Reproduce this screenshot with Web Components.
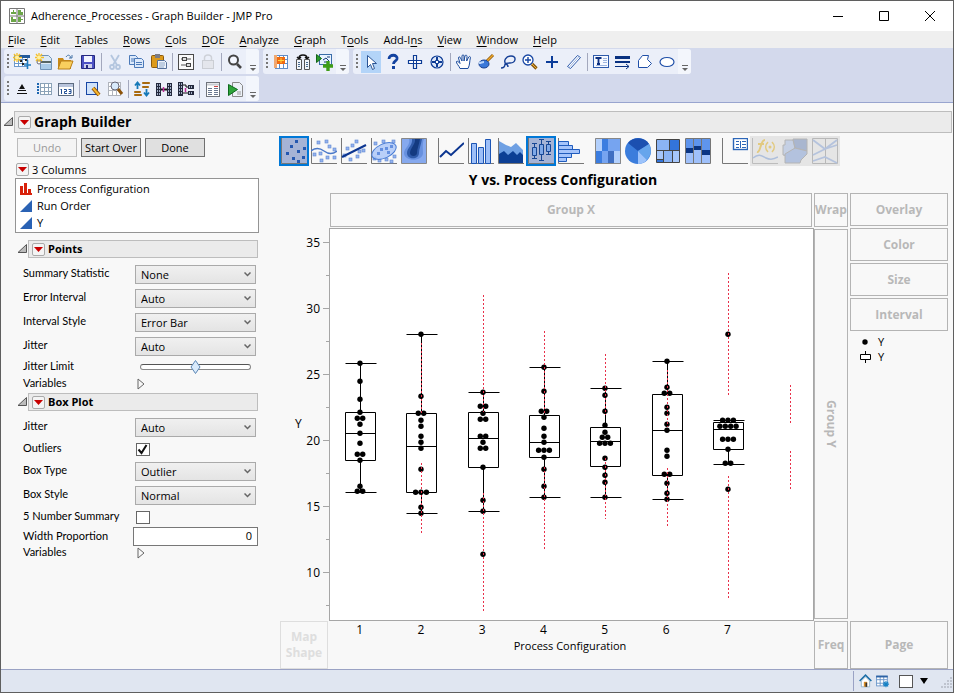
<!DOCTYPE html>
<html lang="en">
<head>
<meta charset="utf-8">
<title>Adherence_Processes - Graph Builder - JMP Pro</title>
<style>
  html, body { margin: 0; }
  body { font: 11px/16px "Open Sans", "Noto Sans", sans-serif; color: #000; background: #f8f8f8; }
</style>
</head>
<body>
<app-window></app-window>
<script>
const define = (name, html, setup) => {
  const tpl = document.createElement('template');
  customElements.define(name, class extends HTMLElement {
    constructor() { super(); this.attachShadow({ mode: 'open' }); }
    connectedCallback() {
      if (this.shadowRoot.childNodes.length) return;
      tpl.innerHTML = typeof html === 'function' ? html(this) : html;
      this.shadowRoot.append(tpl.content.cloneNode(true));
      if (setup) setup(this);
    }
  });
};

/* ---------- toolbar glyphs, 20 x 20 ---------- */
const star = '<path d="M5 1v9M1 5.500h9M2 2l6 7M8 2l-6 7" stroke="#f5c02a" stroke-width="1.300"/><circle cx="5" cy="5.500" r="2" fill="#fff0a0"/>';
const gridlines = (x, y, w, h, c) => `<rect x="${x}" y="${y}" width="${w}" height="${h}" fill="#fff" stroke="${c}"/><path d="M${x} ${y + 4}h${w}M${x} ${y + 8}h${w}M${x + 4} ${y}v${h}M${x + 8} ${y}v${h}" stroke="${c}"/>`;
const ICONS = {
  newtable: gridlines(2.5, 3.5, 13, 11, '#6b98cc') + '<path d="M6 3h12v3H6z" fill="#235a9c"/><path d="M8 8h2v2H8zM13 7h2v2h-2zM10 11h2v2h-2z" fill="#222"/><path d="M15.500 8v9M12 13h7" stroke="#1c7bc0" stroke-width="1.600"/>' + star,
  newscript: '<path d="M6.500 3.500h8l3 3v11h-11z" fill="#dceaf7" stroke="#6f93b8"/><path d="M5 10h12" stroke="#566" stroke-width="2"/><circle cx="5" cy="10" r="2" fill="#fff" stroke="#667"/><path d="M7 12h10v5H7z" fill="#a9cbe8"/>' + star,
  open: '<path d="M2 6h5l1 2h7v9H2z" fill="#c88a18"/><path d="M5 9h12l-3 8H2z" fill="#f9cf5e" stroke="#b97f18"/><path d="M10 5c2-3 4-2 5 1m-2 0h3V3" fill="none" stroke="#4674a8"/>',
  save: '<path d="M3.500 3.500h13v13h-13z" fill="#4d52c4" stroke="#25297f"/><path d="M6 4h8v6H6z" fill="#f2f4ff"/><path d="M6 12h8v4H6z" fill="#cdd0ea"/><path d="M8 13h2v3H8z" fill="#25297f"/>',
  cut: '<g fill="none" stroke="#b4c6df" stroke-width="1.800"><path d="M6 3l6 10M14 3L8 13"/><circle cx="7" cy="15" r="2"/><circle cx="13" cy="15" r="2"/></g>',
  copy: '<g fill="#dce9fb" stroke="#4b79b8"><path d="M2.500 3.500h6l2 2v7h-8z"/><path d="M4 7h5M4 9h5"/><path d="M7.500 6.500h7l2 2v7h-9z"/><path d="M9 10.500h6M9 12.500h6"/></g>',
  paste: '<rect x="2.500" y="3.500" width="12" height="12" rx="1" fill="#dc9a1c" stroke="#8c5b0d"/><path d="M6 2h5v4H6z" fill="#7c7c84"/><path d="M8.500 8.500h7l2 2v6h-9z" fill="#eef3fb" stroke="#55709a"/><path d="M10 11h6M10 13h6M10 15h5" stroke="#8fa8c8"/>',
  prefs: '<rect x="2.500" y="2.500" width="15" height="15" fill="#fafafa" stroke="#4a4a4a"/><path d="M5 7h10M5 13h10" stroke="#555"/><rect x="6.500" y="5.500" width="4" height="3" fill="#ddd" stroke="#444"/><rect x="10.500" y="11.500" width="4" height="3" fill="#ddd" stroke="#444"/>',
  lock: '<path d="M6.500 8V6c0-4 7-4 7 0v2" fill="none" stroke="#ced1d8" stroke-width="1.500"/><rect x="4.500" y="8.500" width="11" height="8" fill="#e4e6ec" stroke="#cbced4"/>',
  search: '<circle cx="8.500" cy="8" r="4.500" fill="#f4f7ff" stroke="#444" stroke-width="2"/><path d="M12 12l4 4" stroke="#444" stroke-width="2.600"/>',
  datatable: gridlines(4.500, 3.500, 12, 13, '#5f8cc6') + '<rect x="6" y="5" width="8" height="7" fill="#f06a10"/><path d="M7 8.500h6M10 6v5" stroke="#ffd23c"/><path d="M3 3h3v13H3z" fill="#f0a870"/>',
  compare: '<path d="M6 6c0-4 8-4 8 0m-2-1l2 2 2-2M4 5l2 2 2-2" fill="none" stroke="#111" stroke-width="1.400"/><path d="M3.500 7.500h5v10h-5zM11.500 7.500h5v10h-5z" fill="#f3f6fa" stroke="#555"/><path d="M5 10.500h2M5 12.500h2M5 14.500h2M13 10.500h2M13 12.500h2M13 14.500h2" stroke="#4a6c90"/>',
  addgraph: '<rect x="4.500" y="2.500" width="12" height="10" fill="#e8f2ff" stroke="#396ca8"/><path d="M1.500 2.500l5 4-5 4z" fill="#2a9a2a" stroke="#14641a"/><path d="M8 8l3-2 3 3M9 10h3M12 5h3" stroke="#173c78" fill="none"/><path d="M13 9v10M8 14h10" stroke="#3e9d17" stroke-width="3.400"/>',
  arrow: '<path d="M6.500 3.500v12l3-3 2 5 2-1-2-5h4z" fill="#fff" stroke="#2b5595"/>',
  help: '<path d="M6 7c0-5 9-5 8 0-.5 2-3.500 2-3.500 5" fill="none" stroke="#1242a0" stroke-width="2.800"/><rect x="9" y="14" width="3" height="3" fill="#1242a0"/>',
  cross: '<path d="M8.500 3.500h3v5h5v3h-5v5h-3v-5h-5v-3h5z" fill="#fff" stroke="#0d3c96" stroke-width="1.200"/><path d="M8.500 8.500h3v3h-3z" fill="none" stroke="#0d3c96"/>',
  globe: '<circle cx="10" cy="10" r="6" fill="#dfe8f8" stroke="#0d3c96" stroke-width="1.200"/><path d="M10 5v3M10 12v3M5 10h3M12 10h3" stroke="#0d3c96" stroke-width="2"/><path d="M8.500 8.500h3v3h-3z" fill="#fff" stroke="#0d3c96"/>',
  hand: '<path d="M6 16.500c-1-3-4-5-3.500-7 1-1 2.500 1 3.500 2L4.500 6c0-1.500 1.500-1.500 2 0L8 9V4c0-1.500 2-1.500 2 0v5l1-5c.3-1.400 2-1 2 .3L12.700 9l2-4c.7-1 2-.5 1.700.7C15.500 9 16 13 14 16.500z" fill="#fff" stroke="#1b4b9d"/>',
  brush: '<path d="M17 3l-6 6" stroke="#8c5a12" stroke-width="3"/><path d="M17 3l-6 6" stroke="#f0a828" stroke-width="1.500"/><ellipse cx="8" cy="12" rx="5" ry="4" fill="#3a78d8" stroke="#173f90"/><path d="M3 11c3 0 2-1 5-1" stroke="#b9d4fa" stroke-width="2" fill="none"/>',
  lasso: '<path d="M8 12c-3-3 0-8 5-8 6 0 5 7-1 7-3 0-5 0-5 1 0 2-1 4-4 4m4-4c2 0 3 1 3 3" fill="none" stroke="#153f96" stroke-width="1.400"/>',
  zoom: '<circle cx="8" cy="8" r="5" fill="#fff" stroke="#1746a4" stroke-width="1.300"/><path d="M8 5v6M5 8h6" stroke="#1746a4" stroke-width="1.400"/><path d="M12 12l4.500 4.500" stroke="#8a5a10" stroke-width="3.200"/><path d="M12 12l4.500 4.500" stroke="#f1b63c"/>',
  plus: '<path d="M10 4v12M4 10h12" stroke="#0b3c99" stroke-width="2"/>',
  ruler: '<path d="M3.500 14.500l10-11 3 2-10 11z" fill="#fff" stroke="#2d5aab"/><path d="M5 15.500l10-11" stroke="#9cb4df"/>',
  text: '<rect x="2.500" y="3.500" width="15" height="12" fill="#f6f9ff" stroke="#2d5aab"/><path d="M4.500 6h6M7.500 6v6M6 12h3" stroke="#0b2f80" stroke-width="1.800"/><path d="M12 6.500h4M12 8.500h4M12 10.500h4M5 13.500h11" stroke="#9cb4df"/>',
  lines: '<path d="M2 5.500h15" stroke="#07307f" stroke-width="3"/><path d="M2 10h15" stroke="#07307f" stroke-width="2"/><path d="M2 14.500h14m-3-2.500l3 2.500-3 2.500" stroke="#07307f" fill="none"/>',
  polygon: '<path d="M3.500 15.500v-7l4-5h6l-1 4 4 4-4 4z" fill="#fff" stroke="#1f4fa8"/>',
  oval: '<ellipse cx="10" cy="10" rx="7" ry="4.500" fill="#fff" stroke="#1f4fa8" stroke-width="1.200"/>',
  stack: '<path d="M10 5l3 5H7z" fill="#111"/><path d="M6 11.500h8M5 14.500h10" stroke="#111"/>',
  rows: gridlines(6.500, 4.500, 11, 11, '#8ba2b8') + '<path d="M3 5h2M3 8h2M3 11h2M3 14h2" stroke="#1d66b0" stroke-width="2"/>',
  numbers: '<rect x="2.500" y="4.500" width="15" height="12" fill="#fff" stroke="#5e6c80"/><path d="M3 5h14v3H3z" fill="#b8c4dc"/><path d="M5.500 10v5M4.500 11l1-1M8 10.500h2.500v2H8.500v2H11M12.500 10.500H15v4h-2.500m.5-2h2" stroke="#214f96" fill="none"/>',
  edit: '<rect x="3.500" y="3.500" width="11" height="12" fill="#cfe2fa" stroke="#1746a4"/><path d="M10 9l6 7" stroke="#8c5309" stroke-width="4"/><path d="M10 9l6 7" stroke="#f6b62d" stroke-width="2"/>',
  findtable: gridlines(3.500, 3.500, 12, 13, '#b0b4bc') + '<circle cx="10" cy="7" r="4" fill="#d8eafc" stroke="#667"/><path d="M13 10l4 5" stroke="#8c5309" stroke-width="3"/>',
  sort: '<path d="M5.500 10V4M3 6.500L5.500 3.500 8 6.500M14.500 10v6M12 13.500l2.500 3 2.500-3" fill="none" stroke="#1679b8" stroke-width="1.800"/><g fill="#f2ad33" stroke="#a86a10"><path d="M10.500 3.500h7v1h-7zM10.500 7.500h6v1h-6zM2.500 12.500h6v1h-6zM2.500 15.500h7v1h-7z"/></g>',
  join: '<path d="M2 4h5v13H2zM13 4h5v13h-5z" fill="#24293d"/><path d="M3 6h3M3 9h3M3 12h3M3 15h3M14 6h3M14 9h3M14 12h3M14 15h3" stroke="#cfe0f8" stroke-width="1.500" stroke-dasharray="1 1"/><path d="M7 10.500h6" stroke="#111" stroke-width="2"/><path d="M9.500 8v5" stroke="#c02a9a" stroke-width="1.500"/>',
  split: '<path d="M2 3h5v14H2z" fill="#24293d"/><path d="M12 6h6v4h-6zM12 12h6v4h-6z" fill="#24293d"/><path d="M3 5h3M3 8h3M3 11h3M3 14h3M13 8h4M13 14h4" stroke="#cfe0f8" stroke-width="1.500" stroke-dasharray="1 1"/><path d="M7 6h3v2h2M7 14h5" stroke="#111" fill="none"/><path d="M9.500 9v4" stroke="#c02a9a" stroke-width="1.500"/>',
  report: '<rect x="3.500" y="3.500" width="13" height="14" fill="#fff" stroke="#70747c"/><path d="M4 5.500h12" stroke="#c9ccd2" stroke-width="2"/><path d="M5 9.500h4M5 11.500h4M5 13.500h4M5 15.500h4M11 9.500h4M11 11.500h4M11 13.500h4M11 15.500h4" stroke="#6a7890"/><path d="M11 7.500h4" stroke="#c44"/>',
  run: '<path d="M7.500 3.500h7l3 3v11h-10z" fill="#edf2f8" stroke="#888"/><path d="M12 13h4M12 15h4" stroke="#999"/><path d="M3.500 5.500l9 5-9 6z" fill="#2ea43a" stroke="#0d6a1d"/>',
  home: '<path d="M3 10l7-7 7 7" fill="none" stroke="#1d6fa8" stroke-width="2"/><path d="M5 10v7h10v-7l-5-5z" fill="#fff" stroke="#8ab0c8"/><path d="M8 11h4v6H8z" fill="#d88e28"/><path d="M10 12v5h2v-5z" fill="#333"/>',
  tablelink: gridlines(4.500, 4.500, 12, 11, '#6592c8') + '<path d="M4 5h13" stroke="#2d62a4" stroke-width="2"/><path d="M15 10v7M11.500 13.500h7M12.500 11l5 5M17.500 11l-5 5" stroke="#1681c4" stroke-width="1.200"/>'
};
define('tool-icon', el => `
<style>:host{display:flex;align-items:center;justify-content:center;width:22px;height:24px}
button{all:unset;display:flex;align-items:center;justify-content:center;width:20px;height:22px}
:host([active]) button{background:#b3d4f8}
svg{width:20px;height:20px}</style>
<button type="button" aria-label="${el.getAttribute('name')}"><svg viewBox="0 0 20 20" fill="none">${ICONS[el.getAttribute('name')]}</svg></button>`);

define('tool-group', `
<style>:host{display:flex;align-items:center;height:25px;background:#ebeff9;border-radius:3px}
.grip{width:7px;height:15px}
button{all:unset;width:13px;height:25px;background:#f3f6fc;border-radius:0 3px 3px 0;display:flex;align-items:flex-end}
::slotted(i){width:1px;height:18px;margin:0 2px;background:#a3a8bd}</style>
<svg class="grip" viewBox="0 0 7 15"><path d="M4 0v15" stroke="#777" stroke-width="2" stroke-dasharray="2 2"/></svg>
<slot></slot>
<button type="button" aria-label="More tools"><svg width="13" height="11" viewBox="0 0 13 11"><path d="M4 2.500h6" stroke="#666"/><path d="M4 5h6l-3 3z" fill="#666"/></svg></button>`);

define('tool-bars', () => {
  const g = list => '<tool-group>' + list.split(' ').map(n => n === '|' ? '<i></i>' : `<tool-icon name="${n.replace('*', '')}"${n.includes('*') ? ' active' : ''}></tool-icon>`).join('') + '</tool-group>';
  return `<style>:host{display:flex;flex-direction:column;gap:2px;padding:1px 3px 1px;background:#d3d9ec;border-bottom:1px solid #99a5cf}
div{display:flex;gap:4px}i{flex:none}</style>
<div>${g('newtable newscript open save | cut copy paste | prefs lock | search')}${g('datatable compare addgraph')}${g('arrow* help cross globe | hand brush lasso zoom plus ruler | text lines polygon oval')}</div>
<div>${g('stack rows numbers | edit findtable | sort join split | report run')}</div>`;
});

define('title-bar', `
<style>:host{display:flex;align-items:center;height:30px;background:#fff;padding-left:8px;font-size:11px}
span{flex:1;padding-left:6px}
button{all:unset;width:46px;height:30px;display:grid;place-items:center}
</style>
<svg width="16" height="16" viewBox="0 0 16 16"><path d="M.5.5h15v15H.5zM8 .5v15M.5 8h15" fill="#fff" stroke="#777"/><path d="M2 6h5V4H5V2H4v2H2zM9 2h3v2h2v3H9zM2 9h2v2h3v3H2zM9 9h3v2h2v1h-2v2H9z" fill="#6ba547"/></svg>
<span>Adherence_Processes - Graph Builder - JMP Pro</span>
<button type="button" aria-label="Minimize"><svg width="12" height="12"><path d="M1 6.500h10" stroke="#000"/></svg></button>
<button type="button" aria-label="Maximize"><svg width="12" height="12"><path d="M1.500 1.500h9v9h-9z" fill="none" stroke="#000"/></svg></button>
<button type="button" aria-label="Close"><svg width="12" height="12"><path d="M1 1l10 10M11 1L1 11" stroke="#000"/></svg></button>`);

define('menu-bar', () => {
  const items = ['_File', '_Edit', '_Tables', '_Rows', '_Cols', '_DOE', '_Analyze', '_Graph', 'T_ools', 'Add-I_ns', '_View', '_Window', '_Help'];
  return `<style>:host{display:flex;gap:15px;height:17px;padding:0 7px;background:#efefef;align-items:center}
button{all:unset;line-height:17px;white-space:nowrap}u{text-underline-offset:2px}</style>` +
    items.map(t => `<button type="button">${t.replace(/_(.)/, '<u>$1</u>')}</button>`).join('');
});

define('red-menu', `
<style>:host{display:block;width:13px;height:13px}
button{all:unset;box-sizing:border-box;width:13px;height:13px;border:1px solid #aaa;border-radius:2px;background:#f4f4f4;display:grid;place-items:center}</style>
<button type="button" aria-label="Options"><svg width="9" height="5"><path d="M0 0h9L4.500 5z" fill="#c80000"/></svg></button>`);

define('outline-bar', `
<style>:host{display:flex;align-items:center;gap:1px}
.tri{flex:none;width:10px;height:10px}
.bar{flex:1;display:flex;align-items:center;gap:3px;box-sizing:border-box;height:18px;padding:0 3px;border:1px solid #bdbdbd;background:#ebebeb;font-weight:700;font-size:11px;line-height:16px}
:host([large]) .bar{height:22px;font-size:14px}</style>
<svg class="tri" viewBox="0 0 10 10"><path d="M1 8.500L9.500.5v8z" fill="#bbb" stroke="#555"/></svg>
<div class="bar"><red-menu></red-menu><slot></slot></div>`);

define('push-button', el => `
<style>:host{display:block}
button{box-sizing:border-box;width:60px;height:19px;padding:0;border:1px solid #707070;background:#e0e0e0;font:inherit;line-height:17px;color:#000;white-space:nowrap}
button:disabled{border-color:#bcbcbc;background:#f4f4f4;color:#9a9a9a}</style>
<button type="button"${el.hasAttribute('disabled') ? ' disabled' : ''}><slot></slot></button>`);

define('column-list', `
<style>:host{display:block}
.head{display:flex;align-items:center;gap:3px;height:17px;padding-left:1px}
ul{list-style:none;margin:0;padding:1px 4px;height:51px;border:1px solid #949494;background:#fff}
li{display:flex;align-items:center;gap:5px;height:17px}</style>
<div class="head"><red-menu></red-menu>3 Columns</div>
<ul>
<li><svg width="12" height="12"><path d="M0 3h3v8H0zM4 0h3v11H4zM8 6h3v5H8zM0 10h12v2H0z" fill="#d8210b"/></svg>Process Configuration</li>
<li><svg width="12" height="12"><path d="M0 12L12 0v12z" fill="#2a62b4"/></svg>Run Order</li>
<li><svg width="12" height="12"><path d="M0 12L12 0v12z" fill="#2a62b4"/></svg>Y</li>
</ul>`);

/* One labelled control of the properties panel */
define('prop-row', el => {
  const kind = el.getAttribute('kind'), v = el.getAttribute('value') || '';
  const field = {
    select: `<span class="combo"><select id="f"><option>${v}</option></select><svg width="7" height="5"><path d="M.5.5l3 3 3-3" fill="none" stroke="#666" stroke-width="1.500"/></svg></span>`,
    check: `<span class="box"><input id="f" type="checkbox"${v ? ' checked' : ''}><svg width="13" height="13"><path d="M2.500 6.500l3 3.500 5-8" fill="none" stroke="#111" stroke-width="2"/></svg></span>`,
    range: '<input id="f" type="range" min="0" max="100" value="50">',
    number: `<input id="f" type="text" value="${v}">`,
    disclose: '<button id="f" type="button" aria-label="Show variables"><svg width="8" height="12"><path d="M1 1l6 5-6 5z" fill="#f8f8f8" stroke="#666"/></svg></button>'
  }[kind];
  return `<style>
:host{display:grid;grid-template-columns:112px 1fr;align-items:center;height:24px;padding-left:8px}
:host([kind=check]){height:20px}
:host([kind=range]),:host([kind=disclose]),:host([kind=number]){height:17px}
label{font:11px/14px Lato,"Open Sans",sans-serif;white-space:nowrap;padding-bottom:2px}
input,select,button{box-sizing:border-box;margin:0;font:inherit;color:#000}
.combo,.box{display:grid;align-items:center}
.combo{margin-right:3px}
.combo>*,.box>*{grid-area:1/1}
.combo svg{justify-self:end;margin-right:5px;pointer-events:none}
select{appearance:none;width:100%;height:19px;border:1px solid #aaa;border-radius:0;padding:0 5px;background:linear-gradient(#f0f0f0,#e4e4e4);line-height:17px}
.box svg{margin-left:1px;pointer-events:none;display:none}
.box input:checked+svg{display:block}
[type=checkbox]{appearance:none;width:14px;height:13px;margin-left:1px;border:1px solid #666;background:#fff}
[type=text]{width:auto;min-width:0;height:19px;margin:0 1px 0 -2px;border:1px solid #777;background:#fff;text-align:right;padding:0 5px 3px}
[type=range]{appearance:none;height:14px;width:auto;min-width:0;margin:0 8px 0 5px;background:none}
[type=range]::-webkit-slider-runnable-track{height:6px;border:1px solid #888;border-top-color:#555;border-radius:3px;background:#fff}
[type=range]::-webkit-slider-thumb{appearance:none;width:11px;height:14px;margin-top:-5px;background:url("data:image/svg+xml,%3Csvg xmlns='http://www.w3.org/2000/svg' width='11' height='14'%3E%3Cpath d='M5.500 .5L10 7l-4.500 6.500L1 7z' fill='%23d9eafb' stroke='%235b86b4'/%3E%3C/svg%3E")}
button{appearance:none;border:0;background:none;padding:0 0 0 2px;height:14px;justify-self:start;display:flex;align-items:center}
</style><label for="f">${el.getAttribute('label')}</label>${field}`;
});

define('control-panel', `
<style>:host{display:block;width:244px;flex:none}
.buttons{display:flex;gap:4px;padding:0 2px;margin-bottom:4px}
outline-bar{margin:7px 1px 4px 2px}
outline-bar.second{margin-top:1px}</style>
<div class="buttons"><push-button disabled>Undo</push-button><push-button>Start Over</push-button><push-button>Done</push-button></div>
<column-list></column-list>
<outline-bar>Points</outline-bar>
<prop-row kind="select" label="Summary Statistic" value="None"></prop-row>
<prop-row kind="select" label="Error Interval" value="Auto"></prop-row>
<prop-row kind="select" label="Interval Style" value="Error Bar"></prop-row>
<prop-row kind="select" label="Jitter" value="Auto"></prop-row>
<prop-row kind="range" label="Jitter Limit"></prop-row>
<prop-row kind="disclose" label="Variables"></prop-row>
<outline-bar class="second">Box Plot</outline-bar>
<prop-row kind="select" label="Jitter" value="Auto"></prop-row>
<prop-row kind="check" label="Outliers" value="1"></prop-row>
<prop-row kind="select" label="Box Type" value="Outlier"></prop-row>
<prop-row kind="select" label="Box Style" value="Normal"></prop-row>
<prop-row kind="check" label="5 Number Summary"></prop-row>
<prop-row kind="number" label="Width Proportion" value="0"></prop-row>
<prop-row kind="disclose" label="Variables"></prop-row>`);

/* ---------- chart type palette, 26 x 26 ---------- */
const axes = '<path d="M.5 0v25.500H26" stroke="#777"/>';
const dots = pts => pts.map(([x, y]) => `<rect x="${x - 1}" y="${y - 1}" width="3" height="3"/>`).join('');
const light = p => `<g fill="#94b3ee" stroke="#5f87cf" stroke-width=".6">${dots(p)}</g>`;
const TYPES = {
  points: axes + `<g fill="#2457b0">${dots([[15, 3], [10, 8], [23, 10], [17, 13], [6, 15], [12, 20], [22, 19], [17, 23]])}</g>`,
  smoother: axes + light([[7, 4], [15, 3], [18, 8], [23, 11], [3, 16], [9, 15], [16, 19], [23, 19], [10, 22]]) + '<path d="M0 13c5-4 9-3 13 0s8 4 13 0" stroke="#4a78c8" stroke-width="1.400"/>',
  line: axes + light([[11, 7], [6, 10], [15, 3], [3, 17], [9, 21], [16, 18], [22, 12], [18, 13]]) + '<path d="M1 19L25 7" stroke="#0b3590" stroke-width="2"/>',
  ellipse: axes + light([[4, 5], [12, 3], [22, 3], [3, 20], [8, 22], [15, 21], [20, 23], [23, 18]]) + '<ellipse cx="13" cy="13" rx="13" ry="7" transform="rotate(-25 13 13)" fill="#a9c4f7" fill-opacity=".8" stroke="#477bd4"/><g fill="#6590e0">' + dots([[7, 15], [10, 11], [15, 10], [17, 14], [20, 8]]) + '</g>',
  contour: '<path d="M.5.5h25v25H.5z" fill="#86a9ee" stroke="#888"/><path d="M8 1c2 6-5 9-5 14 0 9 19 9 19 0 0-5-1-9 1-14z" fill="#6790de"/><path d="M11 1c1 6-5 9-5 14 0 7 12 7 12 0 0-4 2-8 3-14z" fill="#2f5aa8"/><path d="M14 1c1 5-5 9-5 14 0 4 7 4 7 0 0-4 2-8 3-14z" fill="#143a80"/>',
  trend: axes + '<path d="M2 19l6-6 5 4L26 5" stroke="#0b3590" stroke-width="2"/>',
  bars: axes + '<g fill="#9dbff8" stroke="#1c55b5"><path d="M3.500 5.500h5v20h-5zM10.500 9.500h5v16h-5zM17.500 1.500h5v24h-5z"/></g>',
  area: axes + '<path d="M1 3l7 4 5 2 5-4 7 7v13H1z" fill="#6fa0e3"/><path d="M1 16l5-3 4 4 5-4 4 4 3-3 3 3v8H1z" fill="#0c3f94"/>',
  box: axes + '<g fill="#7fa8e8" stroke="#174694"><path d="M6.500 6v15M4 5.500h5M4 20.500h5M13.500 2v20M11 1.500h5M11 22.500h5M20.500 4v12M18 3.500h5M18 16.500h5"/><path d="M4.500 9.500h4v8h-4zM11.500 6.500h4v10h-4zM18.500 6.500h4v7h-4z"/></g>',
  hist: axes + '<g fill="#a5c4fb" stroke="#205cbd"><path d="M.5 3.500h10v4H.5zM.5 7.500h14v4H.5zM.5 11.500h21v4H.5zM.5 15.500h13v4H.5zM.5 19.500h8v4h-8z"/></g>',
  heat: '<path d="M0 0h26v26H0z" fill="#76a4f0"/><path d="M0 0h7v13H0zM13 13h6v12h-6z" fill="#b3d0fc"/><path d="M7 1h6v12H7zM1 13h6v12H1z" fill="#3b7de0"/><path d="M13 13h6v12h-6z" fill="#3f6fc2"/><path d="M19 13h6v12h-6z" fill="#b3d0fc"/><path d="M.5.5h25v25H.5z" stroke="#888"/>',
  pie: '<circle cx="13" cy="13" r="13" fill="#3b7ddc"/><path d="M13 13L3 5A13 13 0 0 1 24 6z" fill="#1c50b0"/><path d="M13 13l11-7a13 13 0 0 1-2 16z" fill="#66a5ec"/><path d="M13 13l9 9a13 13 0 0 1-9 4z" fill="#9cc3fb"/>',
  tree: '<path d="M1.500 1.500h23v23h-23z" fill="#8bb4f5"/><path d="M14 2h10v10H14zM2 22h6v2H2z" fill="#3374da"/><path d="M17 13h7v11h-7zM2 13h6v8H2z" fill="#a6c6fa"/><path d="M1.500 1.500h23v23h-23zM1 12.500h24M14.500 1v11M8.500 13v12M17.500 13v12M1 21.500h7" stroke="#444"/>',
  mosaic: '<path d="M1 1h24v24H1z" fill="#9fc0fa"/><path d="M1 1h7v9H1zM9 1h7v7H9zM17 1h8v11h-8z" fill="#5f95ed"/><path d="M1 10h7v5H1zM9 8h7v4H9zM17 12h8v5h-8z" fill="#0b3583"/><path d="M.5.500h25v25H.5zM8.500 0v26M16.500 0v26" stroke="#777"/>',
  caption: '<path d="M.5 0v25.500H26" stroke="#777"/><rect x="11.500" y=".5" width="14" height="11" fill="#fff" stroke="#2c66b8" stroke-width="1.400"/><path d="M14 3.500h3M14 6.500h3M14 9.500h3M20 3.500h4M20 6.500h4M20 9.500h4M18.500 3v7" stroke="#2c66b8"/>',
  formula: '<path d="M.5 0v25.500H26" stroke="#bcbcbc"/><path d="M5 14c4 1 3-12 8-12M6 6h6" stroke="#e2ca80" stroke-width="2"/><path d="M16 4c-3 3-3 7 0 10M20 4c3 3 3 7 0 10" stroke="#e2ca80" stroke-width="1.600"/><circle cx="18" cy="9" r="1.500" fill="#e2ca80"/><path d="M1 20c6-5 9-2 13 0s7 2 12-1" stroke="#aebfdb" stroke-width="1.500"/>',
  map: '<path d="M1 7h2V2h8l2 8-7 8-5-1z" fill="#c5d0e4" stroke="#b4b4b4"/><path d="M11 1h14v12l-12-3z" fill="#a9b6cf" stroke="#b4b4b4"/><path d="M3 16l10-6 12 3v3l-6 6-1 3H3z" fill="#b3c2de" stroke="#b4b4b4"/>',
  parallel: '<path d="M.5.5h25v25H.5zM13.500 0v26" stroke="#b8b8b8"/><path d="M1 2l12 9 12-9M1 17l12-6 12-4M1 23l12-4 12 6" stroke="#b5c3dd" stroke-width="1.800"/>'
};
define('chart-palette', () => {
  const groups = ['points* smoother line ellipse contour', 'trend bars area box* hist', 'heat pie tree mosaic', 'caption formula- map- parallel-'];
  return `<style>:host{display:flex;gap:7px}div{display:flex}
button{all:unset;box-sizing:border-box;width:30px;height:30px;display:grid;place-items:center}
button[aria-pressed=true]{background:#a5b3d6;border:2px solid #0078d7}
button:disabled{background:#e5e5e5}
svg{width:26px;height:26px;display:block}</style>` +
    groups.map(g => '<div>' + g.split(' ').map(s => {
      const n = s.replace(/[*-]/, '');
      return `<button type="button" aria-label="${n}"${s.endsWith('*') ? ' aria-pressed="true"' : ''}${s.endsWith('-') ? ' disabled' : ''}><svg viewBox="0 0 26 26" fill="none">${TYPES[n]}</svg></button>`;
    }).join('') + '</div>').join('');
});

define('drop-zone', `
<style>:host{display:flex;align-items:center;justify-content:center;box-sizing:border-box;border:1px solid #b4b4b4;color:#b8b8b8;font-weight:700;font-size:12px;text-align:center;min-width:0;white-space:nowrap}
:host([faint]){border-color:#dedede;color:#dedede;white-space:normal}
:host([vertical]){writing-mode:vertical-rl}</style><slot></slot>`);

/* ---------- the plot: window pixels, frame origin at (329, 228) ---------- */
const X0 = 329, Y0 = 228;
const GROUPS = [
  { x: 360, b: [363, 412, 433, 460, 492], p: [363, 381, 399, 412, [418, 2], 424, 433, 443, [454, 2], 460, 486, [491, 2]], r: [] },
  { x: 421, b: [334, 413, 446, 492, 513], p: [334, 396, [413, 2], 420, 426, 436, 442, 448, 469, [492, 3], 507, 513], r: [[343, 413], [463, 533]] },
  { x: 483, b: [392, 412, 438, 467, 511], p: [392, [406, 2], 413, [419, 2], [436, 2], 442, [448, 2], 467, 500, 511, 554], r: [[295, 412], [493, 611]] },
  { x: 544, b: [367, 415, 442, 457, 497], p: [367, 391, [411, 2], 417, 428, 436, 442, [450, 3], 457, 469, 486, 497], r: [[331, 415], [467, 550]] },
  { x: 605, b: [388, 427, 441, 466, 497], p: [388, 395, 411, 425, 432, [437, 2], [443, 3], 458, 467, 475, 482, 497], r: [[354, 415], [458, 519]] },
  { x: 667, b: [361, 394, 430, 475, 499], p: [361, 387, [393, 2], 407, 413, 424, 430, 450, 456, [474, 2], 483, 493, 499], r: [[370, 427], [468, 526]] },
  { x: 728, b: [420, 422, 429, 449, 464], p: [334, [420, 3], [426, 4], [439, 3], 449, [463, 2], 489], r: [[273, 395], [476, 598]] },
  { x: 790, r: [[385, 423], [451, 489]] }
];
define('box-plot', () => {
  let s = '';
  for (const g of GROUPS) {
    const x = g.x - X0 + .5;
    if (g.b) {
      const [t, q3, m, q1, l] = g.b.map(v => v - Y0 + .5);
      s += `<path d="M${x - 15} ${t}h31M${x} ${t}V${q3}M${x - 15} ${q3}h30V${q1}h-30zM${x - 15} ${m}h30M${x} ${q1}V${l}M${x - 15} ${l}h31" fill="none" stroke="#000"/>`;
      for (const q of g.p) {
        const [y, n] = Array.isArray(q) ? q : [q, 1];
        for (let i = 0; i < n; i++) s += `<circle cx="${(x - .5 + (i - (n - 1) / 2) * 5.4).toFixed(1)}" cy="${y - Y0 + .3}" r="2.700"/>`;
      }
    }
    for (const [a, b] of g.r) s += `<path d="M${x} ${a - Y0}V${b - Y0}" stroke="#e8304a" stroke-dasharray="2 2"/>`;
  }
  return `<style>:host{display:block;box-sizing:border-box;background:#fff;border:1px solid #a6a6a6;min-height:0}svg{display:block;width:100%;height:100%}</style>
<svg viewBox="1 1 483 391" role="img" aria-label="Box plots of Y by Process Configuration">${s}</svg>`;
});
define('y-axis', () => {
  let s = '';
  for (let i = 0; i < 6; i++) {
    const y = 14.5 + 66 * i;
    s += `<path d="M44 ${y}h6M47 ${y + 33}h3" stroke="#a6a6a6"/><text x="41" y="${y + 4.5}" text-anchor="end">${35 - 5 * i}</text>`;
  }
  return `<style>:host{display:block;min-height:0}svg{display:block;width:100%;height:100%}text{font-size:12px}</style><svg viewBox="0 0 50 393">${s}<text x="16" y="200">Y</text></svg>`;
});
define('x-axis', `
<style>:host{display:block;text-align:center}
.n{display:grid;grid-template-columns:repeat(7,1fr);padding:1px 56px 0 0;font-size:12px}
.t{padding-right:3px}</style>
<div class="n"><span>1</span><span>2</span><span>3</span><span>4</span><span>5</span><span>6</span><span>7</span></div><div class="t">Process Configuration</div>`);

define('graph-panel', `
<style>:host{display:flex;flex-direction:column;flex:1;min-width:0}
h2{margin:5px 101px 4px 0;font-size:14px;line-height:18px;text-align:center}
.grid{flex:1;display:grid;grid-template-columns:50px 1fr 34px 100px;grid-template-rows:35px 1fr 48px;min-height:0}
.gx{grid-area:1/2;margin:0 2px 1px 1px}
.wrap{grid-area:1/3;margin-bottom:1px}
.y{grid-area:2/1}
.plot{grid-area:2/2}
.gy{grid-area:2/3;margin:1px 0 2px}
.side{grid-area:1/4/3/5;display:flex;flex-direction:column;gap:2px;margin-left:2px}
.side drop-zone{height:33px}
.map{grid-area:3/1;margin:0 1px}
.x{grid-area:3/2}
.freq{grid-area:3/3}
.page{grid-area:3/4;margin-left:2px}
.legend{display:grid;grid-template-columns:14px auto;gap:0 6px;padding:1px 8px;justify-content:start;align-items:center;line-height:15px}
</style>
<chart-palette></chart-palette>
<h2>Y vs. Process Configuration</h2>
<div class="grid">
<drop-zone class="gx">Group X</drop-zone><drop-zone class="wrap">Wrap</drop-zone>
<div class="side"><drop-zone>Overlay</drop-zone><drop-zone>Color</drop-zone><drop-zone>Size</drop-zone><drop-zone>Interval</drop-zone>
<div class="legend"><svg width="14" height="14"><circle cx="7" cy="7" r="2.700"/></svg><span>Y</span><svg width="14" height="14"><path d="M2.500 4.500h10v5h-10zM7.500 1v3M7.500 10v3" fill="#fff" stroke="#000"/></svg><span>Y</span></div></div>
<y-axis class="y"></y-axis><box-plot class="plot"></box-plot><drop-zone class="gy" vertical>Group Y</drop-zone>
<drop-zone class="map" faint>Map Shape</drop-zone><x-axis class="x"></x-axis><drop-zone class="freq">Freq</drop-zone><drop-zone class="page">Page</drop-zone>
</div>`);

define('status-bar', `
<style>:host{display:flex;align-items:center;justify-content:flex-end;height:22px;border-top:1px solid #9aa2c4;background:#e0e6f1}
i{width:1px;height:20px;background:#9aa2c4;margin-right:4px}
input{appearance:none;width:14px;height:13px;margin:0 7px 0 9px;border:1px solid #555;background:#fff;box-sizing:border-box}
button{all:unset;display:flex;margin-right:13px}</style>
<i></i><svg width="15" height="16" viewBox="1 1 18 18" fill="none">${ICONS.home}</svg><svg width="17" height="16" viewBox="1 1 18 18" fill="none">${ICONS.tablelink}</svg>
<input type="checkbox" aria-label="Select"><button type="button" aria-label="Window list"><svg width="8" height="6"><path d="M0 0h8L4 6z"/></svg></button>
<svg width="12" height="16" viewBox="0 0 12 16"><path d="M9 4h2v2H9zM6 7h2v2H6zM9 7h2v2H9zM3 10h2v2H3zM6 10h2v2H6zM9 10h2v2H9zM0 13h2v2H0zM3 13h2v2H3zM6 13h2v2H6zM9 13h2v2H9z" fill="#bfc4cf"/></svg>`);

define('app-window', `
<style>:host{display:flex;flex-direction:column;box-sizing:border-box;min-height:100vh;border:1px solid #5f5f5f}
main{flex:1;display:flex;flex-direction:column;padding-top:8px;min-height:0}
.head{margin:0 1px 0 2px}
.body{flex:1;display:flex;gap:20px;padding:3px 5px 0 14px;min-height:0}
control-panel{padding-top:2px}</style>
<title-bar></title-bar><menu-bar></menu-bar><tool-bars></tool-bars>
<main><outline-bar class="head" large>Graph Builder</outline-bar>
<div class="body"><control-panel></control-panel><graph-panel></graph-panel></div></main>
<status-bar></status-bar>`);
</script>
</body>
</html>
